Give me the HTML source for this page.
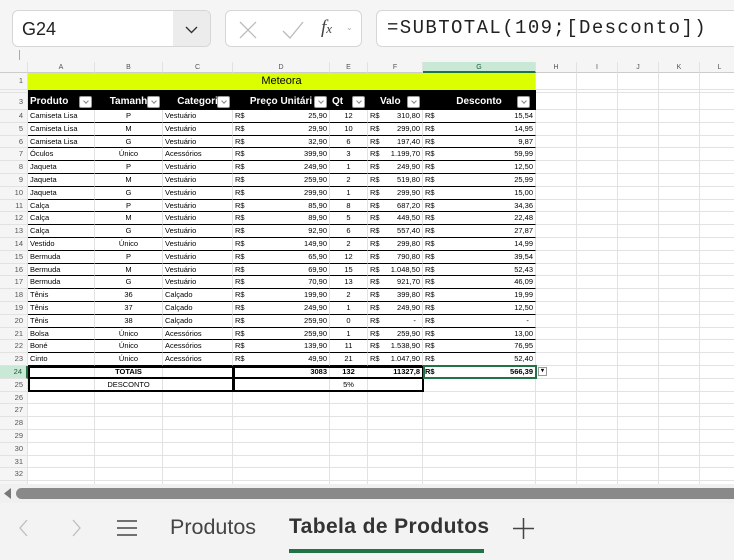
<!DOCTYPE html><html><head><meta charset="utf-8"><style>
*{box-sizing:border-box;margin:0;padding:0}
body{width:734px;height:560px;overflow:hidden;background:#f5f5f5;font-family:"Liberation Sans",sans-serif;position:relative}
.box{position:absolute;background:#fff;border:1px solid #d6d6d6;border-radius:6px}
#grid{position:absolute;left:0;top:62px;width:734px;height:425px;background:#fff;overflow:hidden}
.r{display:flex;height:12.8px;font-size:7.5px;line-height:12px;white-space:nowrap}
.r>div{border-right:1px solid #e2e2e2;border-bottom:1px solid #e2e2e2;overflow:hidden;padding:0 2px;position:relative;flex:none}
.h{width:28px;text-align:right;color:#555;background:#f5f5f5;padding-right:4px!important}
.A{width:67px}.B{width:68px;text-align:center}.C{width:70px}.D{width:97px;text-align:right}.E{width:38px;text-align:center}.F{width:55px;text-align:right}.G{width:113px;text-align:right}.H,.I,.J,.K{width:41px}.L{width:40px}
.l{position:absolute;left:2px}
.t>div.A,.t>div.B,.t>div.C,.t>div.D,.t>div.E,.t>div.F,.t>div.G{border-bottom:1.5px solid #000}
.ch{height:11px;background:#f5f5f5;color:#555;font-size:7px;line-height:11px}
.ch>div{text-align:center;border-bottom:1px solid #ccc}
.hd>div.A,.hd>div.B,.hd>div.C,.hd>div.D,.hd>div.E,.hd>div.F,.hd>div.G{background:#000;color:#fff;font-weight:bold;font-size:10px;line-height:17px;text-align:center;border-right-color:#000;border-bottom-color:#000}
.dd{position:absolute;right:2px;top:3px;width:13px;height:12px;background:#fff;border:1px solid #999;border-radius:2px}
.dd:after{content:"";position:absolute;left:4px;top:2px;width:3px;height:3px;border-right:1px solid #888;border-bottom:1px solid #888;transform:rotate(45deg)}
</style></head><body>
<div class="box" style="left:12px;top:10px;width:199px;height:37px;overflow:hidden"><span style="position:absolute;left:9px;top:8px;font-size:18px;color:#222">G24</span><div style="position:absolute;right:0;top:0;width:37px;height:37px;background:#ececec"></div><svg style="position:absolute;right:12px;top:14px" width="13" height="9"><path d="M1 2l5.5 5.5L12 2" fill="none" stroke="#333" stroke-width="1.4"/></svg></div>
<div class="box" style="left:225px;top:10px;width:137px;height:37px"><svg style="position:absolute;left:12px;top:9px" width="20" height="20"><path d="M2 2l16 16M18 2L2 18" stroke="#bbb" stroke-width="1.3"/></svg><svg style="position:absolute;left:55px;top:9px" width="24" height="20"><path d="M2 11l7 7L22 2" fill="none" stroke="#bbb" stroke-width="1.3"/></svg><span style="position:absolute;left:95px;top:6px;font-family:'Liberation Serif',serif;font-style:italic;font-size:19px;color:#444">f<span style="font-size:13px">x</span></span><span style="position:absolute;left:120px;top:12px;font-size:8px;color:#aaa">⌄</span></div>
<div class="box" style="left:376px;top:10px;width:370px;height:37px"><span style="position:absolute;left:10px;top:6px;font-family:'Liberation Mono',monospace;font-size:19px;letter-spacing:1.4px;color:#222">=SUBTOTAL(109;[Desconto])</span></div>
<div style="position:absolute;left:19px;top:50px;width:1px;height:10px;background:#aaa"></div>
<div id="grid">
<div class="r ch"><div class="h"></div><div class="A">A</div><div class="B">B</div><div class="C">C</div><div class="D">D</div><div class="E">E</div><div class="F">F</div><div class="G" style="text-align:center;background:#c9e9d6;border-bottom:2px solid #217346;color:#1a5c36">G</div><div class="H">H</div><div class="I">I</div><div class="J">J</div><div class="K">K</div><div class="L">L</div></div>
<div class="r" style="height:17px;line-height:16px"><div class="h">1</div><div style="width:508px;background:#dcff00;text-align:center;font-size:11px;border-right:1px solid #e2e2e2;border-bottom:0">Meteora</div><div class="H"></div><div class="I"></div><div class="J"></div><div class="K"></div><div class="L"></div></div>
<div class="r" style="height:3px"><div class="h"></div><div style="width:508px;background:#000;border-bottom:0;border-right-color:#000"></div><div class="H"></div><div class="I"></div><div class="J"></div><div class="K"></div><div class="L"></div></div>
<div class="r hd" style="height:17px"><div class="h" style="line-height:17px">3</div><div class="A" style="text-align:left">Produto<span class="dd"></span></div><div class="B">Tamanh<span class="dd"></span></div><div class="C">Categori<span class="dd"></span></div><div class="D">Preço Unitári<span class="dd"></span></div><div class="E" style="text-align:left">Qt<span class="dd"></span></div><div class="F" style="text-align:left;padding-left:12px">Valo<span class="dd"></span></div><div class="G">Desconto<span class="dd" style="right:5px"></span></div><div class="H"></div><div class="I"></div><div class="J"></div><div class="K"></div><div class="L"></div></div>
<div class="r t"><div class="h">4</div><div class="A">Camiseta Lisa</div><div class="B">P</div><div class="C">Vestuário</div><div class="D"><span class="l">R$</span>25,90</div><div class="E">12</div><div class="F"><span class="l">R$</span>310,80</div><div class="G"><span class="l">R$</span>15,54</div><div class="H"></div><div class="I"></div><div class="J"></div><div class="K"></div><div class="L"></div></div>
<div class="r t"><div class="h">5</div><div class="A">Camiseta Lisa</div><div class="B">M</div><div class="C">Vestuário</div><div class="D"><span class="l">R$</span>29,90</div><div class="E">10</div><div class="F"><span class="l">R$</span>299,00</div><div class="G"><span class="l">R$</span>14,95</div><div class="H"></div><div class="I"></div><div class="J"></div><div class="K"></div><div class="L"></div></div>
<div class="r t"><div class="h">6</div><div class="A">Camiseta Lisa</div><div class="B">G</div><div class="C">Vestuário</div><div class="D"><span class="l">R$</span>32,90</div><div class="E">6</div><div class="F"><span class="l">R$</span>197,40</div><div class="G"><span class="l">R$</span>9,87</div><div class="H"></div><div class="I"></div><div class="J"></div><div class="K"></div><div class="L"></div></div>
<div class="r t"><div class="h">7</div><div class="A">Óculos</div><div class="B">Único</div><div class="C">Acessórios</div><div class="D"><span class="l">R$</span>399,90</div><div class="E">3</div><div class="F"><span class="l">R$</span>1.199,70</div><div class="G"><span class="l">R$</span>59,99</div><div class="H"></div><div class="I"></div><div class="J"></div><div class="K"></div><div class="L"></div></div>
<div class="r t"><div class="h">8</div><div class="A">Jaqueta</div><div class="B">P</div><div class="C">Vestuário</div><div class="D"><span class="l">R$</span>249,90</div><div class="E">1</div><div class="F"><span class="l">R$</span>249,90</div><div class="G"><span class="l">R$</span>12,50</div><div class="H"></div><div class="I"></div><div class="J"></div><div class="K"></div><div class="L"></div></div>
<div class="r t"><div class="h">9</div><div class="A">Jaqueta</div><div class="B">M</div><div class="C">Vestuário</div><div class="D"><span class="l">R$</span>259,90</div><div class="E">2</div><div class="F"><span class="l">R$</span>519,80</div><div class="G"><span class="l">R$</span>25,99</div><div class="H"></div><div class="I"></div><div class="J"></div><div class="K"></div><div class="L"></div></div>
<div class="r t"><div class="h">10</div><div class="A">Jaqueta</div><div class="B">G</div><div class="C">Vestuário</div><div class="D"><span class="l">R$</span>299,90</div><div class="E">1</div><div class="F"><span class="l">R$</span>299,90</div><div class="G"><span class="l">R$</span>15,00</div><div class="H"></div><div class="I"></div><div class="J"></div><div class="K"></div><div class="L"></div></div>
<div class="r t"><div class="h">11</div><div class="A">Calça</div><div class="B">P</div><div class="C">Vestuário</div><div class="D"><span class="l">R$</span>85,90</div><div class="E">8</div><div class="F"><span class="l">R$</span>687,20</div><div class="G"><span class="l">R$</span>34,36</div><div class="H"></div><div class="I"></div><div class="J"></div><div class="K"></div><div class="L"></div></div>
<div class="r t"><div class="h">12</div><div class="A">Calça</div><div class="B">M</div><div class="C">Vestuário</div><div class="D"><span class="l">R$</span>89,90</div><div class="E">5</div><div class="F"><span class="l">R$</span>449,50</div><div class="G"><span class="l">R$</span>22,48</div><div class="H"></div><div class="I"></div><div class="J"></div><div class="K"></div><div class="L"></div></div>
<div class="r t"><div class="h">13</div><div class="A">Calça</div><div class="B">G</div><div class="C">Vestuário</div><div class="D"><span class="l">R$</span>92,90</div><div class="E">6</div><div class="F"><span class="l">R$</span>557,40</div><div class="G"><span class="l">R$</span>27,87</div><div class="H"></div><div class="I"></div><div class="J"></div><div class="K"></div><div class="L"></div></div>
<div class="r t"><div class="h">14</div><div class="A">Vestido</div><div class="B">Único</div><div class="C">Vestuário</div><div class="D"><span class="l">R$</span>149,90</div><div class="E">2</div><div class="F"><span class="l">R$</span>299,80</div><div class="G"><span class="l">R$</span>14,99</div><div class="H"></div><div class="I"></div><div class="J"></div><div class="K"></div><div class="L"></div></div>
<div class="r t"><div class="h">15</div><div class="A">Bermuda</div><div class="B">P</div><div class="C">Vestuário</div><div class="D"><span class="l">R$</span>65,90</div><div class="E">12</div><div class="F"><span class="l">R$</span>790,80</div><div class="G"><span class="l">R$</span>39,54</div><div class="H"></div><div class="I"></div><div class="J"></div><div class="K"></div><div class="L"></div></div>
<div class="r t"><div class="h">16</div><div class="A">Bermuda</div><div class="B">M</div><div class="C">Vestuário</div><div class="D"><span class="l">R$</span>69,90</div><div class="E">15</div><div class="F"><span class="l">R$</span>1.048,50</div><div class="G"><span class="l">R$</span>52,43</div><div class="H"></div><div class="I"></div><div class="J"></div><div class="K"></div><div class="L"></div></div>
<div class="r t"><div class="h">17</div><div class="A">Bermuda</div><div class="B">G</div><div class="C">Vestuário</div><div class="D"><span class="l">R$</span>70,90</div><div class="E">13</div><div class="F"><span class="l">R$</span>921,70</div><div class="G"><span class="l">R$</span>46,09</div><div class="H"></div><div class="I"></div><div class="J"></div><div class="K"></div><div class="L"></div></div>
<div class="r t"><div class="h">18</div><div class="A">Tênis</div><div class="B">36</div><div class="C">Calçado</div><div class="D"><span class="l">R$</span>199,90</div><div class="E">2</div><div class="F"><span class="l">R$</span>399,80</div><div class="G"><span class="l">R$</span>19,99</div><div class="H"></div><div class="I"></div><div class="J"></div><div class="K"></div><div class="L"></div></div>
<div class="r t"><div class="h">19</div><div class="A">Tênis</div><div class="B">37</div><div class="C">Calçado</div><div class="D"><span class="l">R$</span>249,90</div><div class="E">1</div><div class="F"><span class="l">R$</span>249,90</div><div class="G"><span class="l">R$</span>12,50</div><div class="H"></div><div class="I"></div><div class="J"></div><div class="K"></div><div class="L"></div></div>
<div class="r t"><div class="h">20</div><div class="A">Tênis</div><div class="B">38</div><div class="C">Calçado</div><div class="D"><span class="l">R$</span>259,90</div><div class="E">0</div><div class="F"><span class="l">R$</span>-&nbsp;&nbsp;</div><div class="G"><span class="l">R$</span>-&nbsp;&nbsp;</div><div class="H"></div><div class="I"></div><div class="J"></div><div class="K"></div><div class="L"></div></div>
<div class="r t"><div class="h">21</div><div class="A">Bolsa</div><div class="B">Único</div><div class="C">Acessórios</div><div class="D"><span class="l">R$</span>259,90</div><div class="E">1</div><div class="F"><span class="l">R$</span>259,90</div><div class="G"><span class="l">R$</span>13,00</div><div class="H"></div><div class="I"></div><div class="J"></div><div class="K"></div><div class="L"></div></div>
<div class="r t"><div class="h">22</div><div class="A">Boné</div><div class="B">Único</div><div class="C">Acessórios</div><div class="D"><span class="l">R$</span>139,90</div><div class="E">11</div><div class="F"><span class="l">R$</span>1.538,90</div><div class="G"><span class="l">R$</span>76,95</div><div class="H"></div><div class="I"></div><div class="J"></div><div class="K"></div><div class="L"></div></div>
<div class="r t"><div class="h">23</div><div class="A">Cinto</div><div class="B">Único</div><div class="C">Acessórios</div><div class="D"><span class="l">R$</span>49,90</div><div class="E">21</div><div class="F"><span class="l">R$</span>1.047,90</div><div class="G"><span class="l">R$</span>52,40</div><div class="H"></div><div class="I"></div><div class="J"></div><div class="K"></div><div class="L"></div></div>
<div class="r" style="font-weight:bold;position:relative"><div class="h" style="background:#c9e9d6;color:#1a5c36;font-weight:normal;border-right:2px solid #217346">24</div><div class="A"></div><div class="B">TOTAIS</div><div class="C"></div><div class="D">3083</div><div class="E">132</div><div class="F">11327,8</div><div class="G"><span class="l">R$</span>566,39</div><div class="H"><span style="position:absolute;left:2px;top:1px;width:9px;height:9px;border:1px solid #999;background:#fff;font-size:6px;line-height:7px;text-align:center">▾</span></div><div class="I"></div><div class="J"></div><div class="K"></div><div class="L"></div>
<div style="position:absolute;left:28px;top:0;width:206px;height:13.5px;border:2px solid #000;padding:0;background:none"></div><div style="position:absolute;left:233px;top:0;width:191px;height:13.5px;border:2px solid #000;padding:0;background:none"></div><div style="position:absolute;left:423px;top:-1px;width:114px;height:14px;border:2px solid #217346;padding:0;background:none"></div></div>
<div class="r" style="position:relative"><div class="h">25</div><div class="A"></div><div class="B">DESCONTO</div><div class="C"></div><div class="D"></div><div class="E" style="overflow:visible">5%</div><div class="F"></div><div class="G"></div><div class="H"></div><div class="I"></div><div class="J"></div><div class="K"></div><div class="L"></div>
<div style="position:absolute;left:28px;top:0;width:206px;height:13px;border:2px solid #000;border-top:0;padding:0"></div><div style="position:absolute;left:233px;top:0;width:191px;height:13px;border:2px solid #000;border-top:0;padding:0"></div></div>
<div class="r"><div class="h">26</div><div class="A"></div><div class="B"></div><div class="C"></div><div class="D"></div><div class="E"></div><div class="F"></div><div class="G"></div><div class="H"></div><div class="I"></div><div class="J"></div><div class="K"></div><div class="L"></div></div>
<div class="r"><div class="h">27</div><div class="A"></div><div class="B"></div><div class="C"></div><div class="D"></div><div class="E"></div><div class="F"></div><div class="G"></div><div class="H"></div><div class="I"></div><div class="J"></div><div class="K"></div><div class="L"></div></div>
<div class="r"><div class="h">28</div><div class="A"></div><div class="B"></div><div class="C"></div><div class="D"></div><div class="E"></div><div class="F"></div><div class="G"></div><div class="H"></div><div class="I"></div><div class="J"></div><div class="K"></div><div class="L"></div></div>
<div class="r"><div class="h">29</div><div class="A"></div><div class="B"></div><div class="C"></div><div class="D"></div><div class="E"></div><div class="F"></div><div class="G"></div><div class="H"></div><div class="I"></div><div class="J"></div><div class="K"></div><div class="L"></div></div>
<div class="r"><div class="h">30</div><div class="A"></div><div class="B"></div><div class="C"></div><div class="D"></div><div class="E"></div><div class="F"></div><div class="G"></div><div class="H"></div><div class="I"></div><div class="J"></div><div class="K"></div><div class="L"></div></div>
<div class="r"><div class="h">31</div><div class="A"></div><div class="B"></div><div class="C"></div><div class="D"></div><div class="E"></div><div class="F"></div><div class="G"></div><div class="H"></div><div class="I"></div><div class="J"></div><div class="K"></div><div class="L"></div></div>
<div class="r"><div class="h">32</div><div class="A"></div><div class="B"></div><div class="C"></div><div class="D"></div><div class="E"></div><div class="F"></div><div class="G"></div><div class="H"></div><div class="I"></div><div class="J"></div><div class="K"></div><div class="L"></div></div>
<div class="r"><div class="h">33</div><div class="A"></div><div class="B"></div><div class="C"></div><div class="D"></div><div class="E"></div><div class="F"></div><div class="G"></div><div class="H"></div><div class="I"></div><div class="J"></div><div class="K"></div><div class="L"></div></div>
</div>
<div style="position:absolute;left:0;top:484px;width:734px;height:19px;background:#f0f0f0"></div>
<svg style="position:absolute;left:4px;top:488px" width="8" height="11"><path d="M7 0v11L0 5.5z" fill="#777"/></svg>
<div style="position:absolute;left:16px;top:488px;width:730px;height:11px;background:#898989;border-radius:6px"></div>
<div style="position:absolute;left:0;top:503px;width:734px;height:57px;background:#f3f3f3"></div>
<svg style="position:absolute;left:18px;top:518px" width="12" height="20"><path d="M9 2L2 10l7 8" fill="none" stroke="#bbb" stroke-width="1.2"/></svg>
<svg style="position:absolute;left:70px;top:518px" width="12" height="20"><path d="M3 2l7 8-7 8" fill="none" stroke="#bbb" stroke-width="1.2"/></svg>
<svg style="position:absolute;left:117px;top:519px" width="21" height="18"><path d="M0 2h20M0 9h20M0 16h20" stroke="#444" stroke-width="1.6"/></svg>
<div style="position:absolute;left:170px;top:515px;font-size:21.5px;color:#444">Produtos</div>
<div style="position:absolute;left:289px;top:515px;font-size:21px;color:#333;font-weight:bold;letter-spacing:0.4px">Tabela de Produtos</div>
<div style="position:absolute;left:289px;top:549px;width:195px;height:4px;background:#217346"></div>
<svg style="position:absolute;left:513px;top:518px" width="21" height="21"><path d="M10.5 0v21M0 10.5h21" stroke="#444" stroke-width="1.5"/></svg>
</body></html>
